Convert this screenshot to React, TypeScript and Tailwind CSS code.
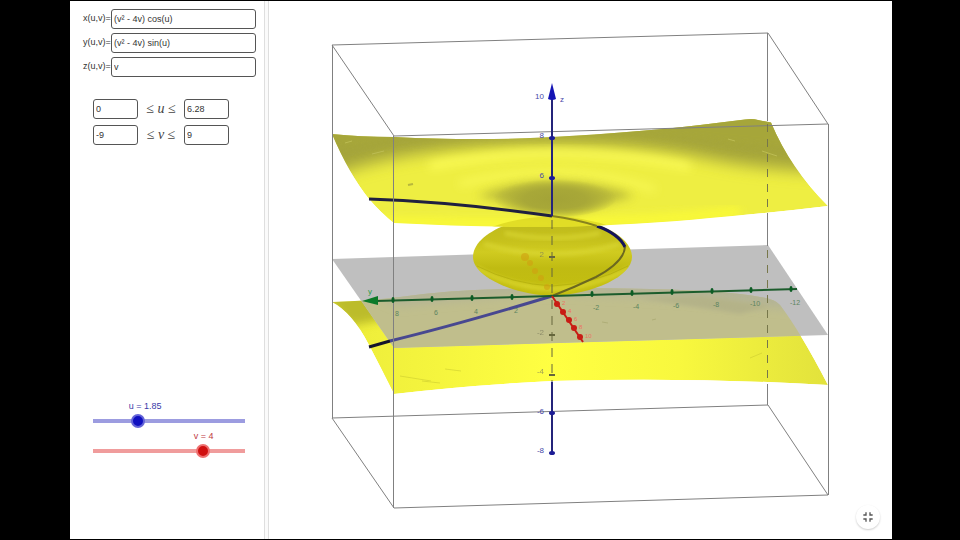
import { useState } from "react";
import { MdFullscreenExit } from "react-icons/md";

// ── Axis data ─────────────────────────────────────────────────────────────────
const Z_TICKS = [138, 178, 413, 453];
const Z_HIDDEN_TICKS = [257, 335, 375];
const Z_LABELS = [
  { y: 99, text: "10" },
  { y: 138, text: "8" },
  { y: 178, text: "6" },
  { y: 414, text: "-6" },
  { y: 453, text: "-8" },
];
const Z_HIDDEN_LABELS = [
  { y: 257, text: "2" },
  { y: 335, text: "-2" },
  { y: 374, text: "-4" },
];
const Y_TICKS = [
  { x: 393, y: 300, text: "8" },
  { x: 432, y: 299, text: "6" },
  { x: 472, y: 298, text: "4" },
  { x: 512, y: 297, text: "2" },
  { x: 592, y: 294, text: "-2" },
  { x: 632, y: 293, text: "-4" },
  { x: 672, y: 292, text: "-6" },
  { x: 712, y: 291, text: "-8" },
  { x: 751, y: 290, text: "-10" },
  { x: 791, y: 289, text: "-12" },
];
const X_DOTS = [
  { x: 557, y: 304, text: "2" },
  { x: 563, y: 312, text: "4" },
  { x: 569, y: 320, text: "6" },
  { x: 574, y: 328, text: "8" },
  { x: 580, y: 337, text: "10" },
];
const X_HIDDEN_DOTS = [
  [525, 257],
  [530, 263],
  [535, 271],
  [541, 278],
  [547, 287],
];

const UPPER =
  "M332 134 Q360 137 394 137 Q480 141 552 137 Q640 132 700 125 L745 119.5 Q753 118.5 758 120 L771 122.5 Q790 168 828 206 Q770 213 710 218 Q640 225 552 227 Q470 227 394 223 Q381 213 369 199 Q349 174 332 134 Z";
const LOWER =
  "M332 302 Q370 301 400 297 Q450 290 500 289 Q570 287 650 289 Q730 291 760 297 Q775 299 780 305 Q800 331 828 385 Q690 377 552 381 Q470 385 394 394 Q381 368 369 345 Q352 312 332 302 Z";
const PLANE = "M332 259 L768 245 L828 335 L394 348 Z";
const BULB =
  "M552 216 C596 218 632 236 632 257 C632 276 594 294 552 296 C511 294 473 276 473 257 C473 236 508 218 552 216 Z";

// ── Formula field ─────────────────────────────────────────────────────────────
function FormulaField({
  label,
  value,
  onChange,
}: {
  label: string;
  value: string;
  onChange: (v: string) => void;
}) {
  return (
    <label className="flex h-5 items-center text-[9px] text-[#333]">
      <span className="w-7 shrink-0 whitespace-nowrap">{label}</span>
      <input
        className="h-5 min-w-0 flex-1 rounded-[3px] border border-[#555] bg-white px-[2px] text-[9px] outline-none"
        value={value}
        onChange={e => onChange(e.target.value)}
      />
    </label>
  );
}

// ── Parameter range ───────────────────────────────────────────────────────────
function RangeRow({
  name,
  min,
  max,
  onMin,
  onMax,
}: {
  name: string;
  min: string;
  max: string;
  onMin: (v: string) => void;
  onMax: (v: string) => void;
}) {
  const box =
    "h-5 w-[45px] rounded-[3px] border border-[#555] bg-white px-[2px] text-[9px] text-[#333] outline-none";
  return (
    <div className="flex items-center">
      <input aria-label={`${name} minimum`} className={box} value={min} onChange={e => onMin(e.target.value)} />
      <span className="w-[46px] text-center font-['Liberation_Serif',serif] text-[14px] leading-5 text-[#444]">
        ≤ <i>{name}</i> ≤
      </span>
      <input aria-label={`${name} maximum`} className={box} value={max} onChange={e => onMax(e.target.value)} />
    </div>
  );
}

// ── Slider ────────────────────────────────────────────────────────────────────
function ParamSlider({
  name,
  min,
  max,
  value,
  onChange,
  textClass,
  trackClass,
}: {
  name: string;
  min: number;
  max: number;
  value: number;
  onChange: (v: number) => void;
  textClass: string;
  trackClass: string;
}) {
  const ratio = (value - min) / (max - min);
  return (
    <div className="flex flex-col">
      <label
        htmlFor={`slider-${name}`}
        className={`h-3 whitespace-nowrap text-[9px] leading-3 ${textClass}`}
        style={{ marginLeft: `calc(${ratio * 100}% - 9px)` }}
      >
        {name} = {value}
      </label>
      <input
        id={`slider-${name}`}
        type="range"
        min={min}
        max={max}
        step={0.01}
        value={value}
        onChange={e => onChange(Number(e.target.value))}
        className={`-mx-[7px] h-[18px] appearance-none bg-[length:calc(100%-14px)_4px] bg-center bg-no-repeat outline-none [&::-webkit-slider-thumb]:h-[14px] [&::-webkit-slider-thumb]:w-[14px] [&::-webkit-slider-thumb]:appearance-none [&::-webkit-slider-thumb]:rounded-full [&::-webkit-slider-thumb]:border-2 ${trackClass}`}
      />
    </div>
  );
}

// ── 3D view ───────────────────────────────────────────────────────────────────
function Graphics3D() {
  return (
    <svg
      viewBox="269 1 623 538"
      className="h-full w-full font-['Liberation_Sans',sans-serif]"
      role="img"
      aria-label="Parametric surface"
    >
      <defs>
        <clipPath id="clip-upper">
          <path d={UPPER} />
        </clipPath>
        <clipPath id="clip-lower">
          <path d={LOWER} />
        </clipPath>
        <clipPath id="clip-plane">
          <path d={PLANE} />
        </clipPath>
        <clipPath id="clip-bulb">
          <path d={BULB} />
        </clipPath>
        <filter id="blur-8" x="-30%" y="-60%" width="160%" height="220%">
          <feGaussianBlur stdDeviation="8" />
        </filter>
        <filter id="blur-5" x="-30%" y="-60%" width="160%" height="220%">
          <feGaussianBlur stdDeviation="5" />
        </filter>
        <filter id="blur-2" x="-30%" y="-60%" width="160%" height="220%">
          <feGaussianBlur stdDeviation="2" />
        </filter>
        <linearGradient id="bulb" x1="0" y1="0" x2="0" y2="1">
          <stop offset="0" stopColor="#bdb91c" />
          <stop offset="0.3" stopColor="#c6c11c" />
          <stop offset="0.45" stopColor="#d0cb20" />
          <stop offset="0.65" stopColor="#c0bb12" />
          <stop offset="1" stopColor="#c4bf10" />
        </linearGradient>
        <radialGradient id="bowl" cx="0.5" cy="0.55" r="0.5">
          <stop offset="0" stopColor="#a3a337" />
          <stop offset="0.5" stopColor="#a8a838" />
          <stop offset="1" stopColor="#a8a838" stopOpacity="0" />
        </radialGradient>
        <linearGradient id="sheet" x1="0" y1="0" x2="1" y2="0">
          <stop offset="0" stopColor="#ecec3a" />
          <stop offset="0.45" stopColor="#ffff42" />
          <stop offset="0.7" stopColor="#f8f83e" />
          <stop offset="1" stopColor="#e2e23c" />
        </linearGradient>
      </defs>

      {/* Lower sheet */}
      <g clipPath="url(#clip-lower)">
        <path d={LOWER} fill="url(#sheet)" />
        <path d="M320 290 L372 290 L392 318 L350 326 Z" fill="#bcbc2a" filter="url(#blur-5)" />
      </g>

      {/* xOy plane, with the sheet showing through */}
      <path d={PLANE} fill="#bfbfbf" />
      <g clipPath="url(#clip-plane)">
        <g clipPath="url(#clip-lower)">
          <path d={PLANE} fill="#c0be8c" />
          <path
            d="M350 285 L552 280 L770 280 L800 310 Q660 296 552 293 Q470 298 400 306 Z"
            fill="#b4b496"
            filter="url(#blur-5)"
          />
          <path d="M640 298 L740 314 L770 306 L700 296 Z" fill="#b4b288" filter="url(#blur-2)" />
        </g>
      </g>
      <g strokeWidth="1" opacity="0.6">
        <path d="M602 322 L608 323 M652 320 L656 319" stroke="#a3a36a" />
        <path d="M400 376 L431 381 M445 369 L461 371 M422 381 L440 383 M750 358 L762 353" stroke="#cdcd30" />
      </g>

      {/* Middle body */}
      <path d={BULB} fill="url(#bulb)" />
      <g clipPath="url(#clip-bulb)" fill="none">
        <path d="M484 244 Q552 264 620 244" stroke="#dcd934" strokeWidth="3" filter="url(#blur-2)" />
        <path d="M505 233 Q552 243 600 233" stroke="#dcd934" strokeWidth="3" filter="url(#blur-2)" />
        <path d="M476 268 Q510 287 552 289 Q595 287 630 268" stroke="#e2de36" strokeWidth="3" filter="url(#blur-2)" />
        <path d="M477 266 Q512 284 552 286 Q594 284 628 266" stroke="#a8a408" strokeWidth="1" opacity="0.5" />
      </g>

      {/* Curve, part behind the body */}
      <path d="M625 247 Q624 262 596 277 Q575 287 552 296" fill="none" stroke="#6b6820" strokeWidth="2" />
      <path d="M597 226 Q619 234 625 247" fill="none" stroke="#14145a" strokeWidth="3" />

      {/* Upper sheet */}
      <g clipPath="url(#clip-upper)">
        <path d={UPPER} fill="#eeee42" />
        <path
          d="M310 100 L820 90 L830 172 Q760 170 705 158 Q640 144 552 144 Q460 144 395 158 Q365 164 330 176 Z"
          fill="#a4a43a"
          filter="url(#blur-8)"
        />
        <path d="M310 110 L800 95 L800 150 Q740 148 690 140 Q620 134 552 136 L394 142 L345 150 Z" fill="#a8a83a" opacity="0.6" filter="url(#blur-5)" />
        <path d="M430 166 Q490 154 552 153 Q630 154 690 167" fill="none" stroke="#ffff5c" strokeWidth="6" filter="url(#blur-5)" />
        <path d="M460 184 Q500 173 552 173 Q610 173 655 190" fill="none" stroke="#fafa58" strokeWidth="5" filter="url(#blur-5)" />
        <path
          d="M478 196 Q510 182 552 181 Q602 182 634 196 Q600 204 568 218 L545 214 Q520 205 478 196 Z"
          fill="#a8a838"
          opacity="0.7"
          filter="url(#blur-5)"
        />
        <ellipse cx="555" cy="197" rx="62" ry="20" fill="url(#bowl)" />
        <path d="M380 222 Q460 224 552 223 Q650 222 740 212" fill="none" stroke="#fcfc34" strokeWidth="9" filter="url(#blur-5)" />
        <path d="M492 227 Q520 217 552 216 Q585 217 612 227 Z" fill="#dcd722" fillOpacity="0.8" />
      </g>
      <g fill="none" strokeWidth="1">
        <path d="M408 185 L413 184" stroke="#b8b83c" strokeWidth="2" />
        <path d="M728 139 L735 141 M762 151 L777 156 M345 143 L352 141 M372 154 L384 151" stroke="#bcbc52" />
      </g>
      <path d="M552 216 Q575 219 597 226" fill="none" stroke="#87821e" strokeWidth="2" />

      {/* Curve, front parts */}
      <path d="M369 199 Q455 202 552 216" fill="none" stroke="#202040" strokeWidth="3" />
      <path d="M552 296 Q460 324 390 341" fill="none" stroke="#484890" strokeWidth="3" />
      <path d="M390 341 L369 347" fill="none" stroke="#14142c" strokeWidth="3" />

      {/* Clipping box */}
      <g fill="none" stroke="#808080" strokeWidth="1">
        <path d="M332 45 L768 33 L828 124 L394 136 Z" />
        <path d="M332 418 L768 405 L828 495 L394 508 Z" />
        <path d="M332.5 45 V418 M393.5 136 V508 M828.5 124 V495" />
        <path d="M767.5 33 V121 M767.5 213 V246 M767.5 384 V405" />
        <path d="M767.5 124 V213 M767.5 250 V384" strokeDasharray="8 7" stroke="#77774a" />
      </g>

      {/* z axis */}
      <g stroke="#24247a" strokeWidth="2">
        <path d="M552 98 V216 M552 382 V455" />
        <path d="M552 220 V382" stroke="#66663c" strokeWidth="1" strokeDasharray="9 7" />
        {Z_HIDDEN_TICKS.map(y => (
          <path key={y} d={`M549 ${y} H555`} stroke="#66663c" />
        ))}
      </g>
      <path d="M552 83 L556 99 Q552 101 548 99 Z" fill="#1414b4" />
      {Z_TICKS.map(y => (
        <ellipse key={y} cx="552" cy={y} rx="3" ry="2" fill="#1c1c96" />
      ))}
      <g fontSize="8" textAnchor="end" fill="#4848a8">
        {Z_LABELS.map(l => (
          <text key={l.text} x="544" y={l.y}>
            {l.text}
          </text>
        ))}
        <text x="564" y="102">
          z
        </text>
      </g>
      <g fontSize="8" textAnchor="end" fill="#77775c" opacity="0.7">
        {Z_HIDDEN_LABELS.map(l => (
          <text key={l.text} x="544" y={l.y}>
            {l.text}
          </text>
        ))}
      </g>

      {/* y axis */}
      <path d="M376 301 L797 289" stroke="#1c5c2c" strokeWidth="2" />
      <path d="M362 301 L378 296 L378 305 Z" fill="#0c7a28" />
      {Y_TICKS.map(t => (
        <g key={t.text}>
          <ellipse cx={t.x} cy={t.y} rx="1.5" ry="3" fill="#0c5c24" />
          <text x={t.x + 4} y={t.y + 16} fontSize="7" textAnchor="middle" fill="#5c8460">
            {t.text}
          </text>
        </g>
      ))}
      <text x="368" y="294" fontSize="8" fill="#2c9c48">
        y
      </text>

      {/* x axis */}
      <path d="M552 296 L583 342" stroke="#c81c14" strokeWidth="2" />
      {X_DOTS.map(d => (
        <g key={d.text}>
          <circle cx={d.x} cy={d.y} r="3" fill="#c81c14" />
          <text x={d.x + 5} y={d.y + 1} fontSize="6" fill="#e87464">
            {d.text}
          </text>
        </g>
      ))}
      {X_HIDDEN_DOTS.map(([x, y], i) => (
        <circle key={x} cx={x} cy={y} r={i === 0 ? 4 : 3} fill="#d0a010" fillOpacity="0.6" />
      ))}
    </svg>
  );
}

// ── Page ──────────────────────────────────────────────────────────────────────
export default function App() {
  const [fx, setFx] = useState("(v² - 4v) cos(u)");
  const [fy, setFy] = useState("(v² - 4v) sin(u)");
  const [fz, setFz] = useState("v");
  const [uMin, setUMin] = useState("0");
  const [uMax, setUMax] = useState("6.28");
  const [vMin, setVMin] = useState("-9");
  const [vMax, setVMax] = useState("9");
  const [u, setU] = useState(1.85);
  const [v, setV] = useState(4);

  return (
    <div className="flex h-screen bg-black py-px pr-[68px] pl-[70px] font-['Liberation_Sans',Arial,sans-serif]">
      <div className="flex min-w-0 flex-1 bg-white">
        <aside className="flex w-[195px] shrink-0 flex-col justify-between border-r border-[#dedede] pt-2 pb-[79px]">
          <div>
            <div className="flex flex-col gap-1 pr-2 pl-[13px]">
              <FormulaField label="x(u,v)=" value={fx} onChange={setFx} />
              <FormulaField label="y(u,v)=" value={fy} onChange={setFy} />
              <FormulaField label="z(u,v)=" value={fz} onChange={setFz} />
            </div>
            <div className="mt-[22px] flex flex-col gap-[6px] pl-[23px]">
              <RangeRow name="u" min={uMin} max={uMax} onMin={setUMin} onMax={setUMax} />
              <RangeRow name="v" min={vMin} max={vMax} onMin={setVMin} onMax={setVMax} />
            </div>
          </div>
          <div className="flex flex-col pr-[19px] pl-[23px]">
            <ParamSlider
              name="u"
              min={0}
              max={6.28}
              value={u}
              onChange={setU}
              textClass="text-[#3a3aa8]"
              trackClass="bg-[linear-gradient(#9c9ce0,#9c9ce0)] [&::-webkit-slider-thumb]:border-[#6464d8] [&::-webkit-slider-thumb]:bg-[#1010c0]"
            />
            <ParamSlider
              name="v"
              min={-9}
              max={9}
              value={v}
              onChange={setV}
              textClass="text-[#c03a44]"
              trackClass="bg-[linear-gradient(#f09c9c,#f09c9c)] [&::-webkit-slider-thumb]:border-[#ee7070] [&::-webkit-slider-thumb]:bg-[#d01010]"
            />
          </div>
        </aside>
        <div className="w-1 shrink-0 border-r border-[#dedede] bg-[#fafafa]" />
        <main className="relative min-w-0 flex-1">
          <Graphics3D />
          <button
            aria-label="Exit fullscreen"
            className="absolute right-3 bottom-[10px] flex h-6 w-6 items-center justify-center rounded-full bg-white text-[#555] shadow-[0_1px_2px_rgba(0,0,0,0.2)]"
          >
            <MdFullscreenExit size={16} />
          </button>
        </main>
      </div>
    </div>
  );
}
